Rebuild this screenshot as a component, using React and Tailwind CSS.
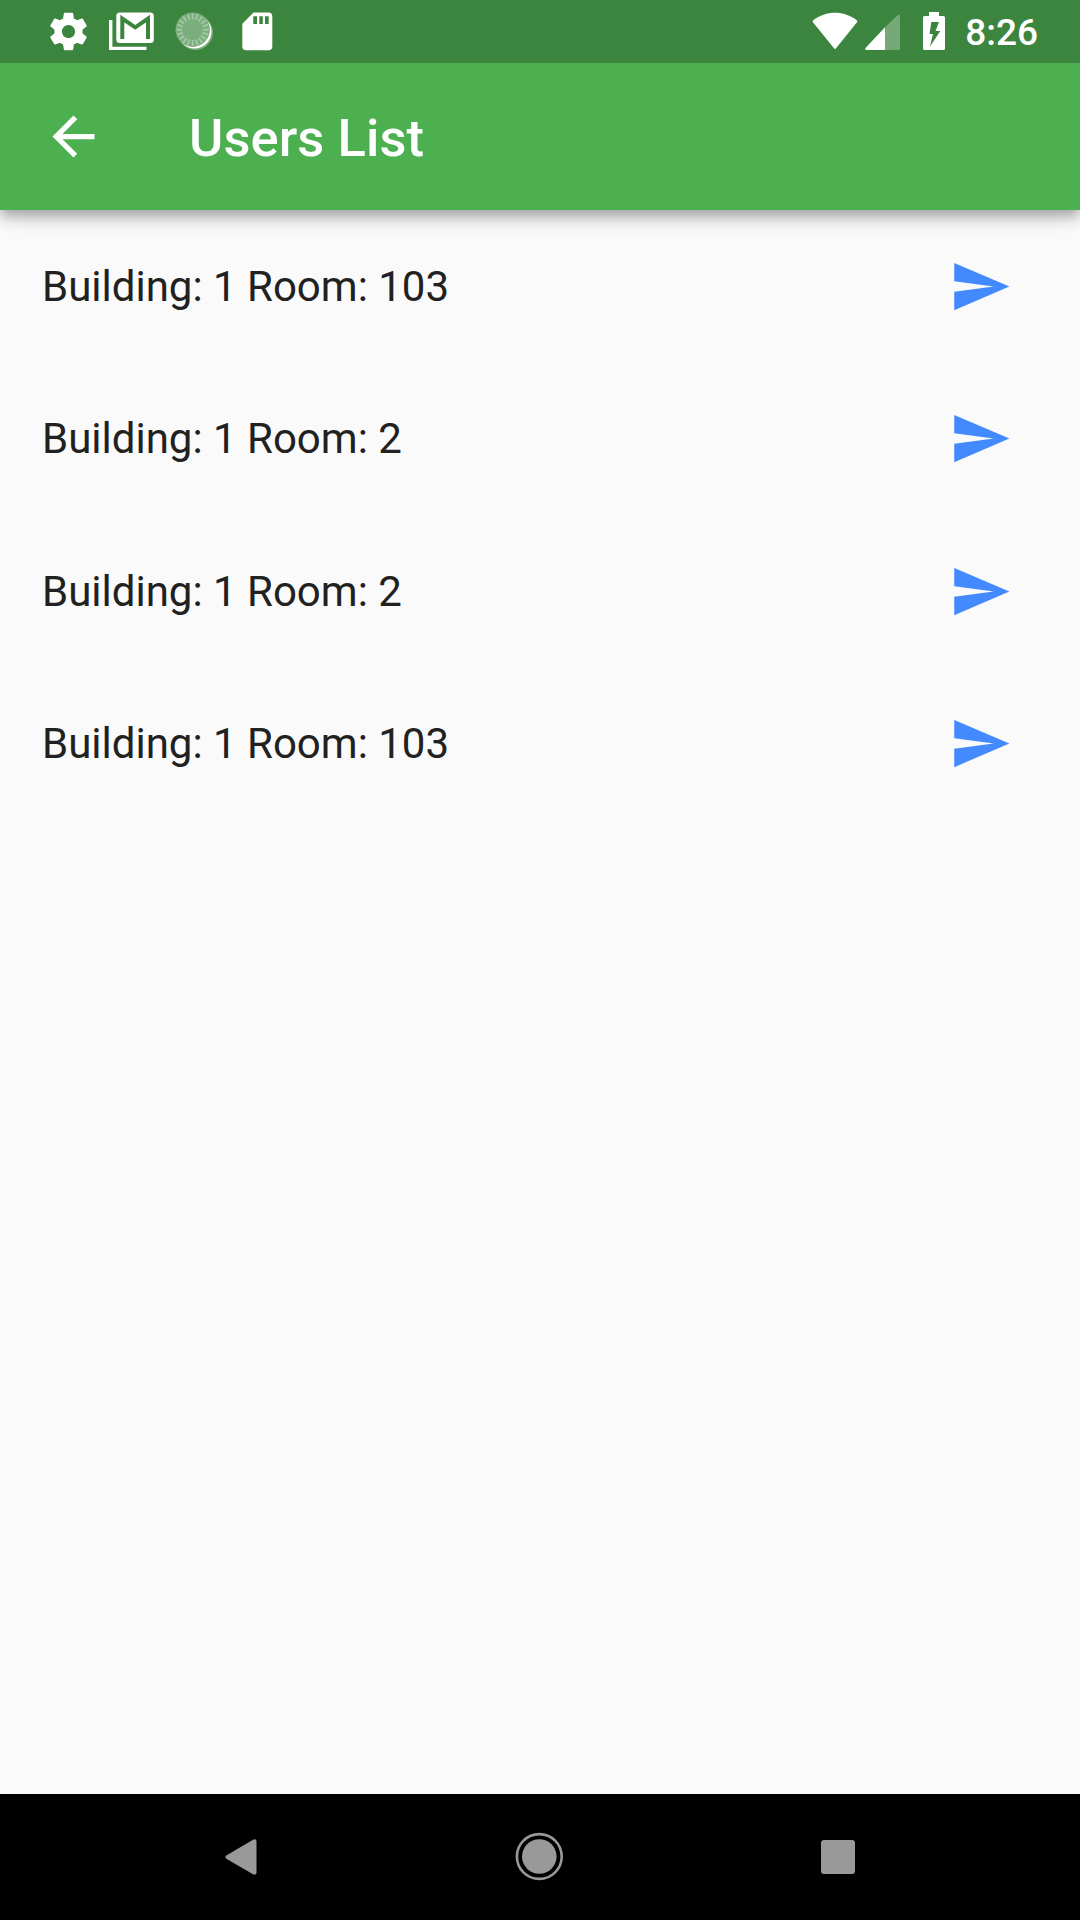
const rooms = ['103', '2', '2', '103'];

const tickAngles = Array.from({ length: 20 }, (_, i) => i * 18);

function StatusBar() {
  return (
    <div className="relative z-10 flex h-[63px] items-start justify-between bg-[#3b853e] text-white">
      <div className="flex">
        <svg className="mt-[9px] ml-[45.5px] h-[45px] w-[45px]" viewBox="0 0 24 24" fill="currentColor">
          <path d="M19.43 12.98c.04-.32.07-.64.07-.98s-.03-.66-.07-.98l2.11-1.65c.19-.15.24-.42.12-.64l-2-3.46c-.12-.22-.39-.3-.61-.22l-2.49 1c-.52-.4-1.08-.73-1.69-.98l-.38-2.65C14.46 2.18 14.25 2 14 2h-4c-.25 0-.46.18-.49.42l-.38 2.65c-.61.25-1.17.59-1.69.98l-2.49-1c-.23-.09-.49 0-.61.22l-2 3.46c-.13.22-.07.49.12.64l2.11 1.65c-.04.32-.07.65-.07.98s.03.66.07.98l-2.11 1.65c-.19.15-.24.42-.12.64l2 3.46c.12.22.39.3.61.22l2.49-1c.52.4 1.08.73 1.69.98l.38 2.65c.03.24.24.42.49.42h4c.25 0 .46-.18.49-.42l.38-2.65c.61-.25 1.17-.59 1.69-.98l2.49 1c.23.09.49 0 .61-.22l2-3.46c.12-.22.07-.49-.12-.64l-2.11-1.65zM12 15.500c-1.930 0-3.500-1.570-3.500-3.500s1.570-3.500 3.500-3.500 3.500 1.570 3.500 3.500-1.570 3.500-3.500 3.500z" />
        </svg>
        <svg className="mt-[12px] ml-[18.5px] h-[39px] w-[45px]" viewBox="0 0 45 39" fill="none">
          <path d="M1.700 8V36.400H37.500" stroke="currentColor" strokeWidth="3.400" />
          <rect x="7.300" y="0.500" width="37.500" height="30.500" rx="3.500" fill="currentColor" />
          <path d="M13.300 27V6.500L26.200 15.300L39 6.500V27" stroke="#3b853e" strokeWidth="4" />
        </svg>
        <svg className="mt-[12px] ml-[21px] h-[39px] w-[39px]" viewBox="0 0 39 39">
          <circle cx="20.500" cy="20.500" r="17.500" fill="#7bad7d" />
          <circle cx="19.500" cy="19.500" r="17" fill="#fff" />
          <circle cx="17.700" cy="17.700" r="17.200" fill="#7bad7d" />
          {tickAngles.map((angle) => (
            <line key={angle} x1="17.700" y1="1.500" x2="17.700" y2="7.300" stroke="#a5c8a6" strokeWidth="1.800" transform={`rotate(${angle} 17.700 17.700)`} />
          ))}
        </svg>
        <svg className="mt-[12px] ml-[28px] h-[39px] w-[31px]" viewBox="0 0 31 39" fill="currentColor">
          <path fillRule="evenodd" d="M11.500 .5H26.500Q30.300 .5 30.300 4.300V34.500Q30.300 38.300 26.500 38.300H4Q.3 38.300 .3 34.500V11.700ZM11.300 4.300V12H15V4.300ZM17.300 4.300V12H20.800V4.300ZM23 4.300V12H26.700V4.300Z" />
        </svg>
      </div>
      <div className="flex">
        <svg className="mt-[12px] h-[39px] w-[46px]" viewBox="0 0 46 39" fill="currentColor">
          <path d="M1.200 8.300C14-1.700 32-1.700 44.800 8.300Q45.700 9.200 45 10.200L24 36.300Q23 37.500 22 36.300L1 10.200Q.3 9.200 1.200 8.300Z" />
        </svg>
        <svg className="mt-[14px] ml-[7px] h-[37px] w-[36px]" viewBox="0 0 36 37" fill="currentColor">
          <path d="M32.500 1.300Q35 0 35 2V34.500Q35 36 33.500 36H20V13.300Z" opacity=".3" />
          <path d="M20 13.300V36H1.500Q-.5 36 .5 34Z" />
        </svg>
        <svg className="mt-[12px] ml-[22px] h-[39px] w-[22px]" viewBox="0 0 22 39" fill="currentColor">
          <path fillRule="evenodd" d="M6 0H16V4H20.500Q22 4 22 5.500V36.500Q22 38 20.500 38H1.500Q0 38 0 36.500V5.500Q0 4 1.500 4H6ZM8.300 10L6.500 22H10L7 34.500L17.300 19H12.500L16 10Z" />
        </svg>
        <time className="mr-[42px] ml-[20px] mt-[10px] font-medium text-[37px] leading-[46px]">8:26</time>
      </div>
    </div>
  );
}

function AppBar() {
  return (
    <header className="flex h-[147px] items-center bg-[#4caf50] text-white shadow-[0_5px_10px_-2px_rgba(0,0,0,0.2),0_10px_13px_rgba(0,0,0,0.14),0_2px_26px_rgba(0,0,0,0.12)]">
      <svg className="ml-[42px] h-[63px] w-[63px]" viewBox="0 0 24 24" fill="currentColor">
        <path d="M20 11H7.830l5.590-5.590L12 4l-8 8 8 8 1.410-1.410L7.830 13H20v-2z" />
      </svg>
      <h1 className="ml-[84px] pt-[2px] text-[52.5px] leading-[62px] font-medium tracking-[0.08px]">Users List</h1>
    </header>
  );
}

function UserRow({ room }) {
  return (
    <li className="flex h-[152.25px] items-center justify-between pr-[68.25px] pl-[42px]">
      <span className="pt-[1.4px] text-[42px] leading-[50px] text-[#212121]">Building: 1 Room: {room}</span>
      <svg className="h-[63px] w-[63px] text-[#448aff]" viewBox="0 0 24 24" fill="currentColor">
        <path d="M2.010 21L23 12 2.010 3 2 10l15 2-15 2z" />
      </svg>
    </li>
  );
}

function NavigationBar() {
  return (
    <nav className="flex h-[126px] items-center bg-black text-[#999]">
      <svg className="ml-[225px] h-[36px] w-[33px]" viewBox="0 0 33 36" fill="currentColor">
        <path d="M1.300 16.400L28 .7Q31.500-.5 31.500 2.500V33.500Q31.500 36.500 28 35.300L1.300 19.800Q-.5 18 1.300 16.400Z" />
      </svg>
      <svg className="ml-[257px] h-[50px] w-[48px]" viewBox="0 0 48 50" fill="currentColor">
        <circle cx="24.300" cy="24.500" r="17.300" />
        <circle cx="24.300" cy="24.500" r="22.400" fill="none" stroke="currentColor" strokeWidth="2.600" />
      </svg>
      <div className="ml-[258px] h-[34px] w-[34px] rounded-[3px] bg-[#999]" />
    </nav>
  );
}

export default function App() {
  return (
    <div className="flex h-[1920px] w-[1080px] flex-col overflow-hidden bg-[#fafafa] font-['Roboto',sans-serif]">
      <StatusBar />
      <AppBar />
      <ul className="flex-1 pt-[0.4px]">
        {rooms.map((room, index) => (
          <UserRow key={index} room={room} />
        ))}
      </ul>
      <NavigationBar />
    </div>
  );
}
